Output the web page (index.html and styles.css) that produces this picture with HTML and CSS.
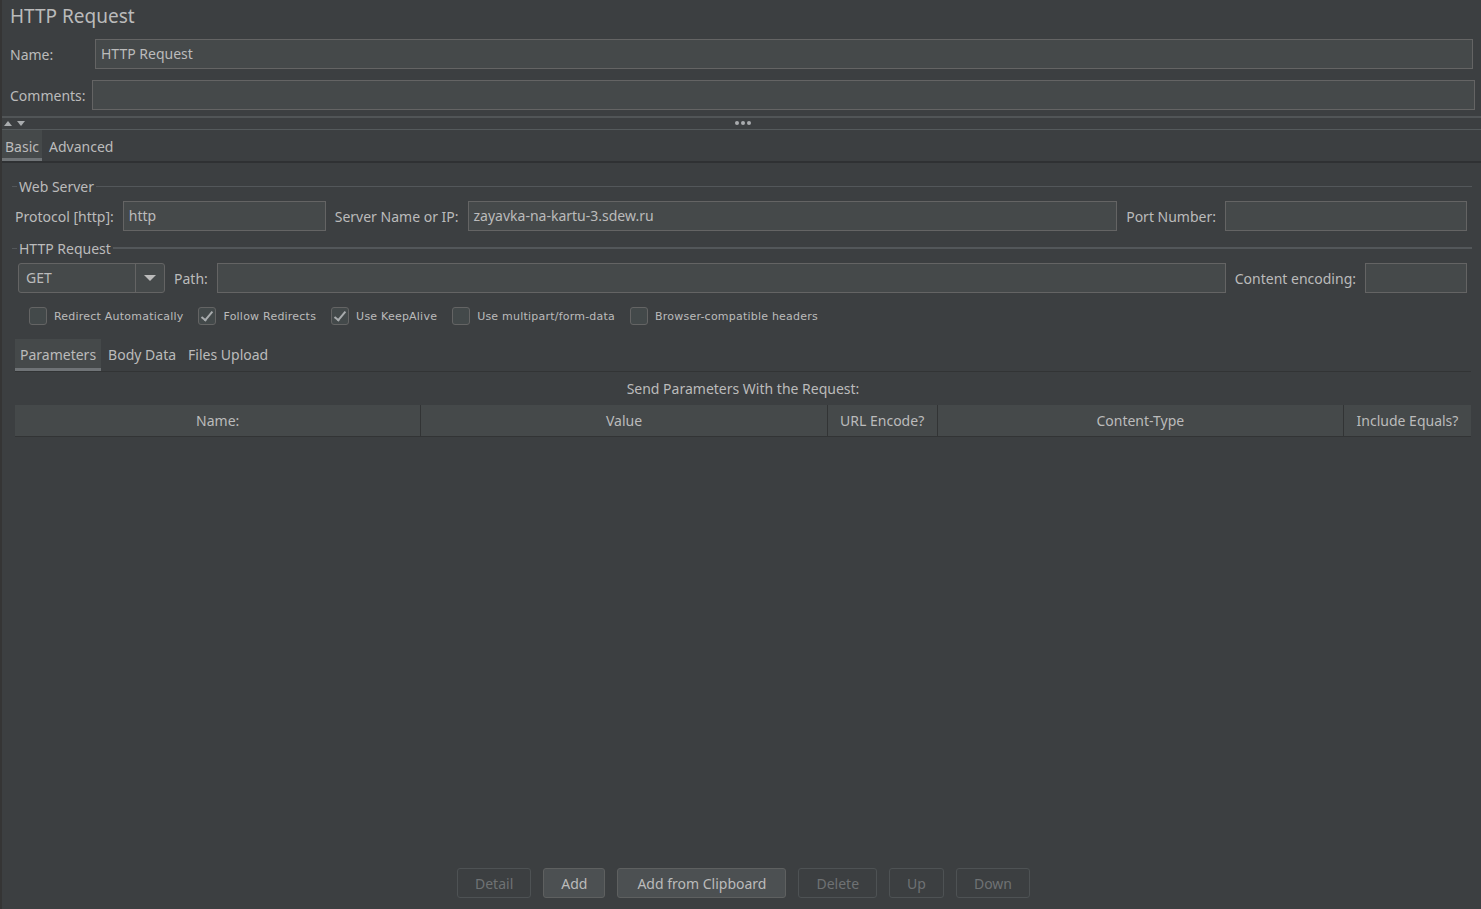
FILE: index.html
```html
<!DOCTYPE html>
<html>
<head>
  <meta charset="UTF-8">
  <title>HTTP Request</title>
  <link rel="stylesheet" href="styles.css">
</head>
<body>
  <div class="panel">
    <div class="title">HTTP Request</div>

    <div class="field-row name-row">
      <label>Name:</label>
      <div class="input">HTTP Request</div>
    </div>
    <div class="field-row comments-row">
      <label>Comments:</label>
      <div class="input"></div>
    </div>

    <div class="splitter">
      <div class="arrows">
        <span class="arrow-up"></span>
        <span class="arrow-down"></span>
      </div>
      <div class="dots"><i></i><i></i><i></i></div>
    </div>

    <div class="tabs main-tabs">
      <div class="tab active">Basic</div>
      <div class="tab">Advanced</div>
    </div>

    <div class="basic">
      <div class="group">
        <div class="group-title"><span>Web Server</span></div>
        <div class="row">
          <label>Protocol [http]:</label>
          <div class="input protocol">http</div>
          <label>Server Name or IP:</label>
          <div class="input server">zayavka-na-kartu-3.sdew.ru</div>
          <label>Port Number:</label>
          <div class="input port"></div>
        </div>
      </div>

      <div class="group">
        <div class="group-title second"><span>HTTP Request</span></div>
        <div class="row">
          <div class="combo">
            <span class="combo-value">GET</span>
            <span class="combo-button"><span class="arrow-down big"></span></span>
          </div>
          <label>Path:</label>
          <div class="input path"></div>
          <label>Content encoding:</label>
          <div class="input encoding"></div>
        </div>
        <div class="checks">
          <div class="check"><span class="box"></span>Redirect Automatically</div>
          <div class="check"><span class="box checked"></span>Follow Redirects</div>
          <div class="check"><span class="box checked"></span>Use KeepAlive</div>
          <div class="check"><span class="box"></span>Use multipart/form-data</div>
          <div class="check"><span class="box"></span>Browser-compatible headers</div>
        </div>
      </div>

      <div class="params">
        <div class="tabs inner-tabs">
          <div class="tab active">Parameters</div>
          <div class="tab">Body Data</div>
          <div class="tab">Files Upload</div>
        </div>
        <div class="caption">Send Parameters With the Request:</div>
        <div class="table-head">
          <div class="col">Name:</div>
          <div class="col">Value</div>
          <div class="col">URL Encode?</div>
          <div class="col">Content-Type</div>
          <div class="col">Include Equals?</div>
        </div>
        <div class="table-body"></div>
      </div>
    </div>

    <div class="buttons">
      <button class="btn" disabled>Detail</button>
      <button class="btn">Add</button>
      <button class="btn wide">Add from Clipboard</button>
      <button class="btn" disabled>Delete</button>
      <button class="btn" disabled>Up</button>
      <button class="btn" disabled>Down</button>
    </div>
  </div>
</body>
</html>
```

FILE: styles.css
```css
html, body {
  margin: 0;
  height: 100%;
}
body {
  background-color: #3c3f41;
  color: #bbbbbb;
  font-family: 'Noto Sans', 'Open Sans', sans-serif;
  font-size: 14px;
  border-left: 2px solid #353535;
  box-sizing: border-box;
}
.panel {
  display: flex;
  flex-direction: column;
  height: 100%;
}
.title {
  font-size: 19px;
  height: 32px;
  line-height: 32px;
  padding-left: 8px;
  margin-bottom: 7px;
}
.field-row {
  display: flex;
  align-items: center;
  height: 30px;
}
.field-row label {
  padding-left: 8px;
}
.name-row label {
  width: 85px;
}
.name-row {
  padding-right: 8px;
}
.comments-row {
  margin-top: 11px;
  padding-right: 6px;
}
.comments-row label {
  width: 82px;
}
.input {
  box-sizing: border-box;
  height: 30px;
  line-height: 28px;
  padding: 0 5px;
  background-color: #45494a;
  border: 1px solid #646464;
  color: #bbbbbb;
  white-space: nowrap;
  overflow: hidden;
}
.field-row .input {
  flex: 1;
}

.splitter {
  position: relative;
  margin-top: 6px;
  height: 11px;
  border-top: 2px solid #515557;
  border-bottom: 1px solid #555a5c;
}
.arrows {
  display: flex;
  gap: 5px;
  padding: 3px 0 0 2px;
}
.arrow-up, .arrow-down {
  width: 0;
  height: 0;
  border-left: 4px solid transparent;
  border-right: 4px solid transparent;
}
.arrow-up {
  border-bottom: 5px solid #a9acae;
}
.arrow-down {
  border-top: 5px solid #a9acae;
}
.dots {
  position: absolute;
  left: 733px;
  top: 3px;
  display: flex;
  gap: 2px;
}
.dots i {
  width: 4px;
  height: 4px;
  border-radius: 50%;
  background-color: #a9acae;
}

.tabs {
  display: flex;
}
.tab {
  position: relative;
  padding: 0 4px;
}
.tab.active {
  background-color: #45494a;
}
.tab.active::after {
  content: '';
  position: absolute;
  left: 0;
  right: 0;
  bottom: 0;
  height: 3px;
  background-color: #6f7376;
}
.main-tabs {
  height: 31px;
  line-height: 33px;
  gap: 4px;
  border-bottom: 2px solid #2f3133;
}
.main-tabs .tab {
  padding: 0 3px;
}

.group {
  margin: 13px 9px 0 10px;
}
.group + .group {
  margin-top: 7px;
}
.group-title {
  display: flex;
  align-items: center;
  height: 20px;
}
.group-title::before {
  content: '';
  width: 5px;
  border-top: 1px solid #53575a;
}
.group-title::after {
  content: '';
  flex: 1;
  border-top: 1px solid #53575a;
}
.group-title span {
  padding: 0 2px;
}
.group-title.second::after {
  border-top-width: 2px;
}
.row {
  display: flex;
  align-items: center;
  gap: 9px;
  margin-top: 5px;
  padding: 0 5px 0 3px;
}
.row .input.protocol {
  width: 203px;
}
.row .input.server {
  flex: 1;
}
.row .input.port {
  width: 242px;
}
.row .input.path {
  flex: 1;
}
.row .input.encoding {
  width: 102px;
}
.combo {
  box-sizing: border-box;
  display: flex;
  width: 147px;
  height: 30px;
  margin-left: 3px;
  border: 1px solid #646464;
  border-radius: 3px;
  background-color: #45494a;
}
.combo-value {
  flex: 1;
  line-height: 28px;
  padding-left: 7px;
  border-right: 1px solid #646464;
}
.combo-button {
  width: 28px;
  display: flex;
  align-items: center;
  justify-content: center;
}
.arrow-down.big {
  border-left-width: 6px;
  border-right-width: 6px;
  border-top-width: 6px;
  border-top-color: #bbbbbb;
}

.checks {
  display: flex;
  align-items: center;
  gap: 15px;
  margin-top: 14px;
  padding-left: 17px;
  font-family: 'DejaVu Sans', sans-serif;
  font-size: 11px;
  letter-spacing: 0.22px;
  height: 18px;
}
.check {
  display: flex;
  align-items: center;
  gap: 7px;
}
.box {
  box-sizing: border-box;
  width: 18px;
  height: 18px;
  border: 1px solid #646464;
  border-radius: 3px;
  background-color: #43494a;
  position: relative;
}
.box.checked::after {
  content: '';
  position: absolute;
  left: 5px;
  top: 1px;
  width: 4px;
  height: 10px;
  border-right: 2px solid #a9acae;
  border-bottom: 2px solid #a9acae;
  transform: rotate(40deg);
}

.basic {
  flex: 1;
  display: flex;
  flex-direction: column;
}
.params {
  flex: 1;
  display: flex;
  flex-direction: column;
  margin: 14px 10px 0 13px;
}
.inner-tabs {
  height: 32px;
  line-height: 32px;
  border-bottom: 1px solid #323435;
}
.inner-tabs .tab {
  padding: 0 5px;
}
.inner-tabs .tab + .tab {
  margin-left: 2px;
}
.caption {
  text-align: center;
  margin-top: 7px;
  height: 20px;
  line-height: 20px;
}
.table-head {
  display: grid;
  grid-template-columns: 1fr 1fr 110px 1fr 127px;
  margin-top: 6px;
  height: 31px;
  line-height: 31px;
  background-color: #45494a;
  border-bottom: 1px solid #323435;
  text-align: center;
}
.table-head .col {
  border-right: 1px solid #323435;
  white-space: nowrap;
}
.table-head .col:last-child {
  border-right: none;
}
.table-body {
  flex: 1;
}

.buttons {
  display: flex;
  justify-content: center;
  gap: 12px;
  padding: 12px 0 11px 4px;
}
.btn {
  box-sizing: border-box;
  height: 30px;
  padding: 0 17px;
  font-family: inherit;
  font-size: 14px;
  color: #bbbbbb;
  background-color: #4c5052;
  border: 1px solid #5e6060;
  border-radius: 3px;
}
.btn.wide {
  padding: 0 19px;
}
.btn:disabled {
  color: #6f7274;
  background-color: #3c3f41;
  border-color: #4e5254;
}
```
